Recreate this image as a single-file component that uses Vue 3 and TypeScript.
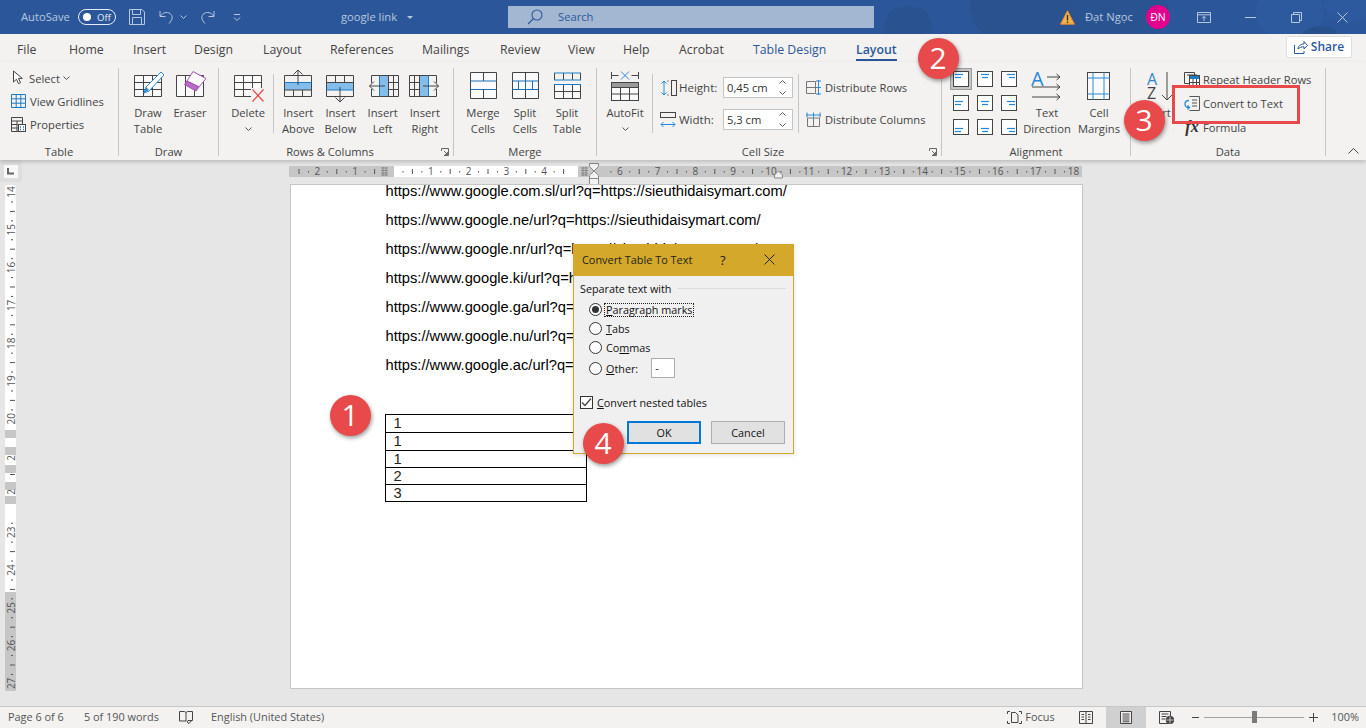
<script setup lang="ts">
const tabs = [
  { t: 'File', w: 52 }, { t: 'Home', w: 64 }, { t: 'Insert', w: 61 }, { t: 'Design', w: 69 },
  { t: 'Layout', w: 67 }, { t: 'References', w: 92 }, { t: 'Mailings', w: 78 }, { t: 'Review', w: 68 },
  { t: 'View', w: 55 }, { t: 'Help', w: 56 }, { t: 'Acrobat', w: 74 },
  { t: 'Table Design', w: 103, c: 'ctx' }, { t: 'Layout', w: 60, c: 'ctx on' },
]
const links = ['com.sl', 'ne', 'nr', 'ki', 'ga', 'nu', 'ac'].map(
  (d) => `https://www.google.${d}/url?q=https://sieuthidaisymart.com/`,
)
const rows = [
  { v: '1', h: 18 }, { v: '1', h: 18 }, { v: '1', h: 17 }, { v: '2', h: 17 }, { v: '3', h: 17 },
]
const aligns = [0, 1, 2].flatMap((r) => [0, 1, 2].map((c) => ({ r, c })))
const radios = [
  { pre: '', u: 'P', post: 'aragraph marks', on: true, cls: 'focus' },
  { pre: '', u: 'T', post: 'abs', on: false, cls: '' },
  { pre: 'Co', u: 'm', post: 'mas', on: false, cls: '' },
]
const base = 393
const cm = 37.8
const hLabels = [-2, -1, 1, 2, 3, 4, 6, 7, 8, 9, 10, 11, 12, 13, 14, 15, 16, 17, 18].map((n) => ({
  n,
  t: String(Math.abs(n)),
  x: base + cm * n,
}))
const hTicks: { x: number; big: boolean }[] = []
for (let i = -10; i < 74; i++) {
  if (i % 4 === 0) continue
  const x = base + (cm * i) / 4
  if (x < 292 || x > 1080 || (x > 378 && x < 395) || (x > 572 && x < 604)) continue
  hTicks.push({ x, big: i % 2 !== 0 ? false : true })
}
const vY = (n: number) => 7 + cm * (n - 14)
const vLabels = [14, 15, 16, 17, 18, 19, 20, 23, 24, 25, 26, 27].map((n) => ({ t: String(n), y: vY(n) }))
const vTicks: { y: number; big: boolean }[] = []
for (let i = 0; i < 56; i++) {
  if (i % 4 === 0) continue
  const y = vY(14) + (cm * i) / 4
  if (y > 504 || (y > 238 && y < 330)) continue
  vTicks.push({ y, big: i % 2 === 0 })
}
const vBands = [245, 262, 280, 297, 311]
</script>

<template>
  <div class="app">
    <header class="titlebar">
      <svg class="blobs" width="1366" height="34" aria-hidden="true">
        <ellipse cx="908" cy="26" rx="24" ry="20" fill="#295290" />
        <ellipse cx="1040" cy="8" rx="70" ry="44" fill="#29528e" />
        <ellipse cx="1120" cy="10" rx="48" ry="38" fill="#2a5391" />
        <ellipse cx="1290" cy="12" rx="34" ry="30" fill="#2d5a9f" />
        <ellipse cx="1350" cy="2" rx="26" ry="20" fill="#2d5a9f" />
        <ellipse cx="1320" cy="36" rx="18" ry="10" fill="#28508c" />
      </svg>
      <span class="autosave">AutoSave</span>
      <span class="toggle"><i></i><b>Off</b></span>
      <svg class="q save" width="16" height="16" viewBox="0 0 16 16"><path d="M.5.5h12.500l2.500 2.500v12.500H.5zM3.500.5v5h8v-5M3.500 15.500v-7h9v7" /></svg>
      <svg class="q undo" width="16" height="16" viewBox="0 0 16 16"><path d="M1 2v5.500h5.500M1.500 7C3.500 3.500 8 2.500 11 4.500c3 2.500 3 6-1 10" /></svg>
      <svg class="q chev1" width="7" height="4" viewBox="0 0 7 4"><path d="M.5.5l3 3 3-3" /></svg>
      <svg class="q redo" width="16" height="16" viewBox="0 0 16 16"><path d="M15 2v5.500H9.500M14.500 7C12.500 3.500 8 2.500 5 4.500c-3 2.500-3 6 1 10" /></svg>
      <svg class="q more" width="8" height="7" viewBox="0 0 8 7"><path d="M1 .5h6M1 3.500l3 3 3-3" /></svg>
      <span class="fname t">google link</span>
      <span class="caret"></span>
      <div class="search">
        <svg width="16" height="16" viewBox="0 0 16 16" fill="none" stroke="#2b579a" stroke-width="1.1"><circle cx="10" cy="6" r="5" /><path d="M6.500 9.500L1 15" /></svg>
        <span class="t">Search</span>
      </div>
      <svg class="warn" width="15" height="15" viewBox="0 0 15 15"><path d="M7.500 .8L14.500 14.200H.5z" fill="#f1b44a" stroke="#e8862c" /><path d="M7.500 5v5.500M7.500 11.500v1.500" stroke="#333" stroke-width="1.400" /></svg>
      <span class="user t">Đạt Ngọc</span>
      <span class="avatar">ĐN</span>
      <svg class="q present" width="14" height="11" viewBox="0 0 14 11"><path d="M.5.5h13v10H.5zM.5 2.800h13M7 9V4.500M5 6.300l2-2 2 2" /></svg>
      <svg class="q mini" width="11" height="1" viewBox="0 0 11 1"><path d="M0 .5h11" /></svg>
      <svg class="q rest" width="11" height="11" viewBox="0 0 11 11"><path d="M.5 2.500h8v8h-8zM2.500 2.500v-2h8v8h-2" /></svg>
      <svg class="q close" width="11" height="11" viewBox="0 0 11 11"><path d="M.5.5l10 10M10.500.5l-10 10" /></svg>
    </header>

    <nav class="tabs">
      <span v-for="(tab, i) in tabs" :key="i" class="tab" :class="tab.c" :style="{ width: tab.w + 'px' }"><em>{{ tab.t }}</em></span>
      <span class="share">
        <svg width="14" height="14" viewBox="0 0 14 14" fill="none" stroke="#2b579a"><path d="M.5 5v8.500h9.500V11M4 9c0-3 2.500-5 6-5V1.500L13.500 5.500 10 9V6.800C7.500 6.800 5.500 7.500 4 9z" /></svg>
        Share
      </span>
    </nav>

    <section class="ribbon">
      <div class="group g-table">
        <div class="body col-list">
          <div class="mini-row">
            <svg width="14" height="16" viewBox="0 0 14 16" fill="#fff" stroke="#444"><path d="M2.500 1v11l3-2.800 2 4.500 2-1-2-4.300h3.800z" /></svg>
            <span>Select</span><svg class="ch" width="7" height="4" viewBox="0 0 7 4"><path d="M.5.5l3 3 3-3" /></svg>
          </div>
          <div class="mini-row">
            <svg width="15" height="14" viewBox="0 0 15 14" fill="none" stroke="#1e7bc8"><path d="M.5.5h14v13H.5zM5.200.5v13M9.800.5v13M.5 4.800h14M.5 9.200h14" /></svg>
            <span>View Gridlines</span>
          </div>
          <div class="mini-row">
            <svg width="15" height="15" viewBox="0 0 15 15" fill="none" stroke="#444"><path d="M.5.5h11v14H.5zM.5 4h11M.5 7.500h6M.5 11h6M6 4v10.500" /><rect x="7.500" y="7.500" width="7" height="7" fill="#fff" /><path d="M9 10h1M12 10h1M9 12.500h1M12 12.500h1" stroke="#1e7bc8" stroke-width="1.400" /></svg>
            <span>Properties</span>
          </div>
        </div>
        <div class="label"><span>Table</span></div>
      </div>

      <div class="group g-draw">
        <div class="body">
          <div class="btn">
            <svg width="32" height="37" viewBox="0 0 32 37"><path class="grid" d="M2.500 7.500h27v21h-27zM11.500 7.500v21M20.500 7.500v21M2.500 14.500h27M2.500 21.500h27" /><path d="M29 4l3 3-15 16-5 2 2-6z" fill="#fff" stroke="#2b88d8" /><path d="M14 19l3 3-5 3z" fill="#2b88d8" /></svg>
            <span>Draw<br />Table</span>
          </div>
          <div class="btn">
            <svg width="32" height="37" viewBox="0 0 32 37"><path class="grid" d="M2.500 7.500h27v21h-27zM11.500 7.500v21M20.500 7.500v21" /><path d="M19 3.500l13 7-7 8.500-12-6z" fill="#fff" stroke="#a64fb5" /><path d="M13 13l12 6-3 4-11.500-6.500z" fill="#b46cc4" stroke="#a64fb5" /></svg>
            <span>Eraser</span>
          </div>
        </div>
        <div class="label"><span>Draw</span></div>
      </div>

      <div class="group g-rows">
        <div class="body">
          <div class="btn">
            <svg width="32" height="37" viewBox="0 0 32 37"><path class="grid" d="M2.500 7.500h27v21h-27zM11.500 7.500v21M20.500 7.500v21M2.500 14.500h27M2.500 21.500h27" /><rect x="19" y="20" width="14" height="15" fill="#f3f2f1" /><path d="M20.500 21.500l11 12M31.500 21.500l-11 12" stroke="#e8484a" stroke-width="1.200" fill="none" /></svg>
            <span>Delete</span>
            <svg class="ch mt" width="7" height="4" viewBox="0 0 7 4"><path d="M.5.5l3 3 3-3" /></svg>
          </div>
          <div class="vsep"></div>
          <div class="btn">
            <svg width="32" height="37" viewBox="0 0 32 37"><rect x="3" y="14" width="27" height="8" fill="#83bdec" /><path class="grid" d="M2.500 7.500h27v21h-27zM2.500 22h27M11.500 22v6.500M20.500 22v6.500" /><path d="M2.500 14.500h27" stroke="#1e7bc8" fill="none" /><path d="M16 2v15M11.500 6.500L16 2l4.500 4.500" fill="none" stroke="#444" /></svg>
            <span>Insert<br />Above</span>
          </div>
          <div class="btn">
            <svg width="32" height="37" viewBox="0 0 32 37"><rect x="3" y="14" width="27" height="8" fill="#83bdec" /><path class="grid" d="M2.500 7.500h27v21h-27zM2.500 14.500h27M11.500 7.500v7M20.500 7.500v7" /><path d="M2.500 22h27" stroke="#1e7bc8" fill="none" /><path d="M16 19v15M11.500 29.500L16 34l4.500-4.500" fill="none" stroke="#444" /></svg>
            <span>Insert<br />Below</span>
          </div>
          <div class="btn">
            <svg width="32" height="37" viewBox="0 0 32 37"><rect x="12" y="8" width="9" height="20" fill="#83bdec" /><path class="grid" d="M4.500 7.500h27v21h-27zM21.500 7.500v21M21.500 14.500h10M21.500 21.500h10M26.500 7.500v21" /><path d="M12.500 7.500v21" stroke="#1e7bc8" fill="none" /><rect x="1" y="15" width="10" height="6" fill="#f3f2f1" /><path d="M18 18H2.500M7 13.500L2.500 18 7 22.500" fill="none" stroke="#444" /></svg>
            <span>Insert<br />Left</span>
          </div>
          <div class="btn">
            <svg width="32" height="37" viewBox="0 0 32 37"><rect x="11" y="8" width="9" height="20" fill="#83bdec" /><path class="grid" d="M.5 7.500h27v21H.5zM10.500 7.500v21M.5 14.500h10M.5 21.500h10M5.500 7.500v21" /><path d="M19.500 7.500v21" stroke="#1e7bc8" fill="none" /><rect x="22" y="15" width="8" height="6" fill="#f3f2f1" /><path d="M14 18h15.500M25 13.500l4.500 4.500-4.500 4.500" fill="none" stroke="#444" /></svg>
            <span>Insert<br />Right</span>
          </div>
        </div>
        <div class="label"><span>Rows &amp; Columns</span><svg class="launch" width="8" height="8" viewBox="0 0 8 8"><path d="M.5 3V.5h7v7H3M3 3l3.500 3.500M6.500 4v2.500H4" /></svg></div>
      </div>

      <div class="group g-merge">
        <div class="body">
          <div class="btn">
            <svg width="32" height="37" viewBox="0 0 32 37"><path class="grid" d="M3.500 4.500h26v26h-26zM16.500 4.500v8.500M16.500 21.500v9" /><path d="M3.500 13h26M3.500 21.500h26" stroke="#1a6fb5" fill="none" /></svg>
            <span>Merge<br />Cells</span>
          </div>
          <div class="btn">
            <svg width="32" height="37" viewBox="0 0 32 37"><path class="grid" d="M3.500 4.500h26v26h-26zM16.500 4.500v8.500M16.500 21.500v9" /><path d="M3.500 13h26M3.500 21.500h26M9.500 13v8.500M16.500 13v8.500M23.500 13v8.500" stroke="#1a6fb5" fill="none" /></svg>
            <span>Split<br />Cells</span>
          </div>
          <div class="btn">
            <svg width="32" height="37" viewBox="0 0 32 37"><path class="grid" d="M3.500 5v7M12.500 5v7M21.500 5v7M29.500 5v7M3.500 16.500h26v14h-26zM3.500 23.500h26M12.500 16.500v14M21.500 16.500v14" /><path d="M3 5h27M3 12h27M3 16.500h27" stroke="#1a7cc4" fill="none" /></svg>
            <span>Split<br />Table</span>
          </div>
        </div>
        <div class="label"><span>Merge</span></div>
      </div>

      <div class="group g-size">
        <div class="body">
          <div class="btn">
            <svg width="32" height="37" viewBox="0 0 32 37"><path class="grid" d="M2.500 4v7M29.500 4v7M2.500 7.500h7M22.500 7.500h7" /><path d="M12 3.500l8 8M20 3.500l-8 8" stroke="#2b88d8" fill="none" /><rect x="2.500" y="14.500" width="27" height="18" fill="#fafafa" stroke="#444" /><rect x="2.500" y="14.500" width="27" height="5" fill="#9a9a9a" stroke="#444" /><path class="grid" d="M2.500 26h27M11.500 19.500v13M20.500 19.500v13" /></svg>
            <span>AutoFit</span>
            <svg class="ch mt" width="7" height="4" viewBox="0 0 7 4"><path d="M.5.5l3 3 3-3" /></svg>
          </div>
          <div class="vsep s1"></div>
          <div class="size-col">
            <div class="size-row">
              <svg width="17" height="16" viewBox="0 0 17 16" fill="none"><path d="M4 1v14M1.500 3.500L4 1l2.500 2.500M1.500 12.500L4 15l2.500-2.500" stroke="#2b88d8" /><path d="M7 1h2M7 15h2" stroke="#888" /><rect x="11.500" y=".5" width="5" height="15" stroke="#444" /></svg>
              <span class="lab">Height:</span>
              <div class="spin"><span>0,45 cm</span><svg width="7" height="15" viewBox="0 0 7 15"><path d="M.5 3.500l3-3 3 3M.5 11.500l3 3 3-3" /></svg></div>
            </div>
            <div class="size-row">
              <svg width="17" height="16" viewBox="0 0 17 16" fill="none"><rect x=".5" y=".5" width="15" height="5" stroke="#444" /><path d="M1 12.500h14M3.500 10L1 12.500 3.500 15M12.500 10l2.500 2.500-2.500 2.500" stroke="#2b88d8" /></svg>
              <span class="lab">Width:</span>
              <div class="spin"><span>5,3 cm</span><svg width="7" height="15" viewBox="0 0 7 15"><path d="M.5 3.500l3-3 3 3M.5 11.500l3 3 3-3" /></svg></div>
            </div>
          </div>
          <div class="vsep s2"></div>
          <div class="dist-col">
            <div class="dist-row">
              <svg width="15" height="15" viewBox="0 0 15 15" fill="none"><path d="M.5 1.500h9v12h-9zM.5 7.500h9" stroke="#777" /><path d="M12.500 0v15M10 1h5M10 7.500h5M10 14h5" stroke="#2b88d8" /></svg>
              <span>Distribute Rows</span>
            </div>
            <div class="dist-row">
              <svg width="15" height="15" viewBox="0 0 15 15" fill="none"><path d="M1.500 6h12v8.500h-12zM7.500 6v8.500" stroke="#777" /><path d="M0 3h15M1 .5v5M7.500 .5v5M14 .5v5" stroke="#2b88d8" /></svg>
              <span>Distribute Columns</span>
            </div>
          </div>
        </div>
        <div class="label"><span>Cell Size</span><svg class="launch" width="8" height="8" viewBox="0 0 8 8"><path d="M.5 3V.5h7v7H3M3 3l3.500 3.500M6.500 4v2.500H4" /></svg></div>
      </div>

      <div class="group g-align">
        <div class="body">
          <div class="al-grid">
            <span v-for="a in aligns" :key="a.r * 3 + a.c" class="al" :class="{ sel: a.r === 0 && a.c === 0 }">
              <svg width="16" height="16" viewBox="0 0 16 16" fill="none">
                <rect x=".5" y=".5" width="15" height="15" fill="#fff" stroke="#444" />
                <path :d="`M${2 + a.c * 2} ${3.5 + a.r * 3}h8`" stroke="#1e88e0" stroke-width="1.200" />
                <path :d="`M${2 + a.c * 3} ${6.5 + a.r * 3}h6`" stroke="#1e88e0" stroke-width="1.200" />
              </svg>
            </span>
          </div>
          <div class="btn wide">
            <svg width="32" height="37" viewBox="0 0 32 37" fill="none">
              <text x="0" y="18" class="bigA">A</text>
              <path d="M16 9h13M25.500 6l3.500 3-3.500 3M1 19h28M25.500 16l3.500 3-3.500 3M1 29h28M25.500 26l3.500 3-3.500 3" stroke="#444" />
            </svg>
            <span>Text<br />Direction</span>
          </div>
          <div class="btn wide2">
            <svg width="32" height="37" viewBox="0 0 32 37" fill="none"><rect x="4.500" y="4.500" width="22" height="27" stroke="#444" fill="#fafafa" /><path d="M4.500 10h22M4.500 26h22M10 4.500v27M21 4.500v27" stroke="#2b88d8" /></svg>
            <span>Cell<br />Margins</span>
          </div>
        </div>
        <div class="label"><span>Alignment</span></div>
      </div>

      <div class="group g-data">
        <div class="body">
          <div class="btn sort">
            <svg width="32" height="37" viewBox="0 0 32 37" fill="none">
              <text x="3" y="17" class="azA">A</text><text x="3" y="31" class="azZ">Z</text>
              <path d="M23 4v28M18 27l5 5 5-5" stroke="#444" />
            </svg>
            <span>Sort</span>
          </div>
          <div class="data-col">
            <div class="data-row">
              <svg width="16" height="15" viewBox="0 0 16 15" fill="none"><path d="M.5.5h10v11H.5zM3 3h10" stroke="#444" /><rect x="5.500" y="3.500" width="10" height="11" fill="#fff" stroke="#444" /><path d="M6 4h9v3H6z" fill="#1e7bc8" /><path d="M5.500 10.500h10M9 7v7M12.500 7v7" stroke="#444" /></svg>
              <span>Repeat Header Rows</span>
            </div>
            <div class="data-row">
              <svg width="16" height="15" viewBox="0 0 16 15" fill="none"><path d="M5.500.5h10v14h-10" stroke="#555" /><path d="M8 4h5M8 7h5M8 10h5" stroke="#555" /><path d="M5 4.500C2 4.500 1 6 1 8s1.500 3.500 4 3.500M3.500 9.500l2 2-2 2" stroke="#2b88d8" stroke-width="1.300" /></svg>
              <span>Convert to Text</span>
            </div>
            <div class="data-row">
              <span class="fx">fx</span>
              <span>Formula</span>
            </div>
          </div>
        </div>
        <div class="label"><span>Data</span></div>
      </div>

      <div class="collapse">
        <svg width="11" height="6" viewBox="0 0 11 6" fill="none" stroke="#444"><path d="M.5 5.500l5-5 5 5" /></svg>
      </div>
    </section>

    <svg class="hruler" width="1366" height="25" viewBox="0 160 1366 25">
      <rect x="0" y="160" width="22" height="22" fill="#dedede" />
      <rect x="4" y="165" width="14" height="13" fill="#f8f8f8" />
      <path d="M8 168v5.500h6" fill="none" stroke="#666" stroke-width="2" />
      <rect x="289" y="166" width="793" height="11" fill="#c6c6c6" />
      <rect x="394" y="166" width="184" height="11" fill="#fff" />
      <path d="M381 168h7M381 170.500h7M381 173h7M381 175h7M383 167v9M386 167v9M581 168h7M581 170.500h7M581 173h7M581 175h7M583 167v9M586 167v9" stroke="#777" stroke-width=".7" fill="none" />
      <g fill="#555">
        <rect v-for="(k, i) in hTicks" :key="i" :x="k.x" :y="k.big ? 169 : 171" width="1" :height="k.big ? 5 : 1.5" />
      </g>
      <text v-for="l in hLabels" :key="l.n" :x="l.x" y="175" class="rtxt" text-anchor="middle">{{ l.t }}</text>
      <path d="M589.500 163.500h9v3l-4.500 4.500-4.500-4.500zM589.500 178.500v-3l4.500-4.500 4.500 4.500v3z" fill="#f2f2f2" stroke="#888" />
      <rect x="589.500" y="178.500" width="9" height="6" fill="#f2f2f2" stroke="#888" />
      <path d="M774.500 178v-3l4-4 4 4v3z" fill="#f2f2f2" stroke="#888" />
    </svg>

    <main class="work">
      <svg class="vruler" width="291" height="522" viewBox="0 0 291 522">
        <rect x="5" y="0" width="11" height="506" fill="#fff" />
        <rect v-for="b in vBands" :key="b" x="5" :y="b" width="11" height="8" fill="#c6c6c6" />
        <rect x="5" y="407" width="11" height="99" fill="#c6c6c6" />
        <g fill="#555">
          <rect v-for="(k, i) in vTicks" :key="i" :x="k.big ? 10 : 11" :y="k.y" :width="k.big ? 5 : 2" height="1" />
        </g>
        <text v-for="l in vLabels" :key="l.t" class="rtxt" text-anchor="middle" :transform="`translate(15 ${l.y}) rotate(-90)`">{{ l.t }}</text>
        <text class="rtxt" text-anchor="middle" transform="translate(15 273) rotate(-90)">2</text>
        <text class="rtxt" text-anchor="middle" transform="translate(15 307) rotate(-90)">2</text>
        <rect x="10" y="289" width="5" height="1" fill="#555" />
      </svg>
      <article class="page">
        <p v-for="l in links" :key="l" class="line">{{ l }}</p>
        <table class="tbl">
          <tbody>
            <tr v-for="(r, i) in rows" :key="i" :style="{ height: r.h + 'px' }"><td>{{ r.v }}</td></tr>
          </tbody>
        </table>
      </article>
    </main>

    <footer class="status">
      <span class="s1a t">Page 6 of 6</span>
      <span class="s1b t">5 of 190 words</span>
      <svg class="s1c" width="14" height="13" viewBox="0 0 14 13" fill="none" stroke="#444"><path d="M.5.500h5l1.500 1 1.500-1h5v9H9L8 11M7 1.500V10H.5V.5M8 11l2 1.500 3.500-4" /></svg>
      <span class="s1d t">English (United States)</span>
      <span class="grow"></span>
      <svg width="15" height="13" viewBox="0 0 15 13" fill="none" stroke="#444"><path d="M.5 3V.5H3M12 .5h2.500V3M.5 10v2.500H3M12 12.500h2.500V10M4.500 11.500v-10h4l2.500 2.500v7.500z" /></svg>
      <span class="focus-t t">Focus</span>
      <svg class="v1" width="14" height="13" viewBox="0 0 14 13" fill="none" stroke="#444"><path d="M.5.5h13v12H.5zM7 .5v12M2.500 3.500h2.500M2.500 6h2.500M2.500 8.500h2.500M9 3.500h2.500M9 6h2.500M9 8.500h2.500" /></svg>
      <span class="v2">
        <svg width="12" height="13" viewBox="0 0 12 13" fill="#f3f2f1" stroke="#444"><path d="M.5.5h11v12H.5z" /><path d="M2.500 3h7M2.500 5h7M2.500 7h7M2.500 9h7M2.500 10.800h7" fill="none" /></svg>
      </span>
      <svg class="v3" width="15" height="13" viewBox="0 0 15 13" fill="none" stroke="#444"><path d="M9 12.500H.5V.5h11v5M2.500 3h7M2.500 5.500h5M2.500 8h4" /><circle cx="11" cy="9" r="3.800" fill="#444" /><path d="M7.500 9h7M11 5.500v7" stroke="#f3f2f1" stroke-width=".7" /></svg>
      <span class="minus"></span>
      <span class="slider"><i></i></span>
      <span class="plus"></span>
      <span class="pct t">100%</span>
    </footer>

    <!-- Dialog floating above the document -->
    <div class="dialog">
      <div class="d-title">
        <span class="d-name">Convert Table To Text</span>
        <span class="d-q">?</span>
        <svg width="11" height="11" viewBox="0 0 11 11" fill="none" stroke="#222"><path d="M.5.5l10 10M10.500.5l-10 10" /></svg>
      </div>
      <div class="d-body">
        <div class="legend"><span>Separate text with</span><i></i></div>
        <div v-for="r in radios" :key="r.u" class="radio-row">
          <span class="radio" :class="{ on: r.on }"></span>
          <span class="r-label" :class="r.cls">{{ r.pre }}<u>{{ r.u }}</u>{{ r.post }}</span>
        </div>
        <div class="radio-row other">
          <span class="radio"></span>
          <span class="r-label"><u>O</u>ther:</span>
          <span class="other-in">-</span>
        </div>
        <div class="check-row">
          <span class="check">
            <svg width="11" height="9" viewBox="0 0 11 9" fill="none" stroke="#444" stroke-width="1.300"><path d="M1 4.500l3 3 6-7" /></svg>
          </span>
          <span><u>C</u>onvert nested tables</span>
        </div>
        <div class="d-btns">
          <button class="ok" type="button">OK</button>
          <button type="button">Cancel</button>
        </div>
      </div>
    </div>

    <!-- Callouts drawn over the screenshot -->
    <span class="mark m1">1</span>
    <span class="mark m2">2</span>
    <span class="mark m3">3</span>
    <span class="mark m4">4</span>
    <span class="redbox"></span>
  </div>
</template>

<style scoped>
.app {
  position: relative;
  width: 1366px;
  height: 728px;
  overflow: hidden;
  display: flex;
  flex-direction: column;
  background: #e6e6e6;
  font-family: "Open Sans", "Liberation Sans", sans-serif;
  font-size: 11.2px;
  color: #444;
}
svg { display: block; flex: none; }
.t { margin-bottom: 2px; }

/* title bar */
.titlebar {
  position: relative;
  height: 34px;
  flex: none;
  background: #2b579a;
  display: flex;
  align-items: center;
  color: #b7c7de;
  overflow: hidden;
}
.titlebar > * { position: relative; }
.titlebar > .blobs { position: absolute; left: 0; top: 0; }
.q { fill: none; stroke: #b7c7de; stroke-width: 1; }
.autosave { margin: 0 0 1px 21px; width: 57px; }
.toggle {
  width: 38px;
  height: 16px;
  box-sizing: border-box;
  border: 1px solid #e6ecf5;
  border-radius: 8px;
  display: flex;
  align-items: center;
  padding-left: 4px;
  color: #e6ecf5;
  font-size: 9.5px;
}
.toggle i { width: 8px; height: 8px; border-radius: 50%; background: #fff; margin-right: 6px; }
.toggle b { font-weight: 400; }
.save { margin-left: 13px; }
.undo { margin-left: 14px; }
.chev1 { margin-left: 5px; }
.redo { margin-left: 12px; }
.more { margin-left: 18px; }
.fname { margin-left: 100px; width: 66px; }
.caret {
  width: 0; height: 0;
  border-left: 3px solid transparent;
  border-right: 3px solid transparent;
  border-top: 3px solid #b7c7de;
}
.search {
  margin-left: 95px;
  width: 366px;
  height: 22px;
  background: #a4b7d2;
  display: flex;
  align-items: center;
  padding-left: 19px;
  box-sizing: border-box;
  color: #2b579a;
}
.search span { margin-left: 15px; }
.warn { margin-left: 186px; }
.user { margin-left: 10px; width: 61px; }
.avatar {
  width: 24px; height: 24px;
  border-radius: 50%;
  background: #e3008c;
  color: #fff;
  display: flex;
  align-items: center;
  justify-content: center;
  font-size: 10.5px;
}
.present { margin-left: 27px; }
.mini { margin-left: 34px; }
.rest { margin-left: 35px; }
.close { margin-left: 35px; }

/* tabs */
.tabs {
  height: 28px;
  flex: none;
  background: #f3f2f1;
  display: flex;
  align-items: center;
  padding-left: 17px;
  box-sizing: border-box;
  font-size: 12.3px;
}
.tab { position: relative; height: 28px; line-height: 31px; flex: none; }
.tab em { font-style: normal; display: inline-block; height: 27px; }
.tab.ctx { color: #2b579a; }
.tab.on em { border-bottom: 2px solid #2b579a; font-weight: 600; box-sizing: border-box; }
.share {
  margin-left: 370px;
  width: 66px;
  height: 22px;
  background: #fff;
  border: 1px solid #e1dfdd;
  border-radius: 2px;
  box-sizing: border-box;
  color: #2b579a;
  font-weight: 600;
  display: flex;
  align-items: center;
  justify-content: center;
  gap: 3px;
  font-size: 12px;
  margin-top: -3px;
}

/* ribbon */
.ribbon {
  position: relative;
  z-index: 2;
  height: 98px;
  flex: none;
  background: #f3f2f1;
  box-shadow: 0 2px 4px rgba(0, 0, 0, .18);
  display: flex;
  padding-top: 6px;
  box-sizing: border-box;
}
.group {
  height: 88px;
  flex: none;
  box-sizing: border-box;
  border-right: 1px solid #c8c6c4;
  display: flex;
  flex-direction: column;
}
.body { height: 76px; display: flex; flex: none; }
.label {
  height: 12px;
  display: flex;
  line-height: 16px;
  flex: none;
}
.label span { flex: 1; text-align: center; }
.launch { fill: none; stroke: #666; margin: 4px 4px 0 0; }
.g-table { width: 119px; }
.g-draw { width: 100px; }
.g-rows { width: 235px; }
.g-merge { width: 143px; }
.g-size { width: 345px; }
.g-align { width: 189px; }
.g-data { width: 195px; }
.g-draw .body, .g-rows .body, .g-merge .body { padding-left: 8px; }
.g-size .body { padding-left: 7px; }
.g-rows .btn { width: 42.2px; }
.col-list { flex-direction: column; padding: 0 0 0 11px; gap: 3px; }
.mini-row { height: 20px; display: flex; align-items: center; gap: 4px; }
.ch { fill: none; stroke: #555; margin-left: -1px; }
.btn {
  width: 42px;
  flex: none;
  display: flex;
  flex-direction: column;
  align-items: center;
  text-align: center;
  line-height: 16px;
}
.btn span { display: block; }
.btn svg + span { white-space: nowrap; }
.grid { fill: none; stroke: #444; }
.btn:has(.grid) > svg:first-child .grid:first-child { fill: #fafafa; }
.ch.mt { margin: 6px 0 0; }
.vsep { width: 1px; height: 59px; margin: 6px 3px 0 4px; background: #c8c6c4; flex: none; }
.vsep.s1 { margin: 6px 7px 0 6px; }
.vsep.s2 { margin: 6px 7px 0 5px; }
.size-col { width: 133px; display: flex; flex-direction: column; gap: 11px; padding-top: 9px; flex: none; }
.size-row { display: flex; align-items: center; height: 21px; }
.lab { margin-left: 2px; width: 44px; font-size: 11.5px; }
.spin {
  width: 70px;
  height: 21px;
  box-sizing: border-box;
  background: #fff;
  border: 1px solid #c4c4c4;
  display: flex;
  align-items: center;
  justify-content: space-between;
  padding: 0 6px 0 3px;
  color: #333;
}
.spin svg { fill: none; stroke: #555; }
.dist-col { display: flex; flex-direction: column; gap: 12px; padding-top: 9px; }
.dist-row { display: flex; align-items: center; gap: 4px; height: 20px; white-space: nowrap; }
.al-grid {
  margin: 3px 0 0 11px;
  display: grid;
  grid-template-columns: 16px 16px 16px;
  grid-auto-rows: 16px;
  gap: 8px;
  flex: none;
  align-self: flex-start;
}
.al { position: relative; display: block; }
.al.sel::before {
  content: "";
  position: absolute;
  inset: -3px;
  background: #c8c6c4;
  border: 1px solid #9c9c9c;
}
.al svg { position: relative; }
.btn.wide { width: 58px; margin-left: 1px; }
.btn.wide2 { width: 46px; margin-left: 0; }
.bigA { font-size: 20px; fill: #2b88d8; font-family: "Open Sans", sans-serif; }
.azA { font-size: 16px; fill: #2b88d8; font-family: "Open Sans", sans-serif; }
.azZ { font-size: 16px; fill: #444; font-family: "Open Sans", sans-serif; }
.btn.sort { margin-left: 8px; }
.data-col { margin-left: 3px; display: flex; flex-direction: column; gap: 4px; padding-top: 1px; }
.data-row { height: 20px; display: flex; align-items: center; gap: 3px; white-space: nowrap; }
.fx { width: 16px; font: italic 700 16px "Liberation Serif", serif; color: #333; text-align: center; }
.collapse { margin: 80px 0 0 22px; }
.hruler { flex: none; }

/* workspace */
.work { flex: 1; display: flex; align-items: flex-start; min-height: 0; }
.vruler { flex: none; }
.rtxt { font-size: 10px; fill: #555; font-family: "Open Sans", sans-serif; }
.page {
  width: 791px;
  height: 503px;
  flex: none;
  background: #fff;
  box-shadow: 0 0 0 1px #c6c6c6;
  overflow: hidden;
  font-family: "Liberation Sans", sans-serif;
  font-size: 14.7px;
  color: #000;
  padding-left: 94.5px;
  box-sizing: border-box;
}
.line { margin: 0; height: 29px; line-height: 29px; white-space: nowrap; position: relative; top: -7px; }
.line:first-child { margin-top: -1px; }
.tbl {
  margin: 27px 0 0 -1px;
  border-collapse: collapse;
  width: 202px;
}
.tbl td {
  border: 1px solid #000;
  padding: 0 0 0 8px;
  line-height: 15px;
  color: #222;
}

/* status bar */
.status {
  height: 22px;
  flex: none;
  background: #f3f2f1;
  border-top: 1px solid #c8c6c4;
  box-sizing: border-box;
  display: flex;
  align-items: center;
  font-size: 10.9px;
  color: #555;
  padding-right: 7px;
}
.s1a { margin-left: 8px; width: 76px; }
.s1b { width: 95px; }
.s1d { margin-left: 18px; }
.grow { flex: 1; }
.focus-t { margin-left: 3px; width: 54px; }
.v2 { margin-left: 13px; width: 40px; height: 21px; background: #d0d0d0; display: flex; align-items: center; justify-content: center; }
.v3 { margin-left: 13px; }
.minus { margin-left: 18px; width: 7px; height: 1px; background: #444; }
.slider { position: relative; margin-left: 5px; width: 100px; height: 1px; background: #a0a0a0; }
.slider i { position: absolute; left: 48px; top: -6px; width: 5px; height: 12px; background: #7a7a7a; }
.plus { position: relative; margin-left: 5px; width: 9px; height: 1px; background: #444; }
.plus::after { content: ""; position: absolute; left: 4px; top: -4px; width: 1px; height: 9px; background: #444; }
.pct { margin-left: 13px; }

/* dialog */
.dialog {
  position: absolute;
  z-index: 5;
  left: 573px;
  top: 244px;
  width: 221px;
  height: 210px;
  box-sizing: border-box;
  border: 1px solid #d4a82a;
  background: #f0f0f0;
  box-shadow: 0 1px 4px rgba(0, 0, 0, .14);
  color: #111;
  font-family: "Open Sans", "Liberation Sans", sans-serif;
  font-size: 10.8px;
}
.d-title {
  height: 31px;
  background: #d4a82a;
  display: flex;
  align-items: center;
  padding: 0 0 2px 8px;
  box-sizing: border-box;
  color: #222;
  font-size: 10.9px;
}
.d-name { width: 138px; }
.d-q { width: 44px; font-size: 13px; }
.d-body { padding: 4px 6px 0; }
.legend { display: flex; align-items: center; gap: 5px; height: 16px; }
.legend i { flex: 1; height: 1px; background: #dcdcdc; margin-right: 1px; }
.radio-row { display: flex; align-items: center; height: 19px; padding-left: 9px; }
.legend + .radio-row { margin-top: 4px; }
.radio-row.other { height: 22px; }
.radio {
  width: 13px; height: 13px;
  box-sizing: border-box;
  border: 1px solid #333;
  border-radius: 50%;
  background: #fff;
  flex: none;
  margin-right: 3px;
  display: flex;
  align-items: center;
  justify-content: center;
}
.radio.on::after { content: ""; width: 7px; height: 7px; border-radius: 50%; background: #333; }
.r-label { padding: 0 1px; }
.r-label.focus { outline: 1px dotted #222; outline-offset: 0; line-height: 12px; }
.other-in {
  margin-left: 12px;
  width: 24px;
  height: 20px;
  box-sizing: border-box;
  background: #fff;
  border: 1px solid #adadad;
  padding-left: 3px;
  line-height: 18px;
}
.check-row { display: flex; align-items: center; gap: 4px; margin-top: 15px; height: 16px; }
.check {
  width: 13px; height: 13px;
  box-sizing: border-box;
  border: 1px solid #333;
  background: #fff;
  display: flex;
  align-items: center;
  justify-content: center;
}
.d-btns { display: flex; justify-content: flex-end; gap: 10px; margin: 11px 2px 0 0; }
.d-btns button {
  width: 74px;
  height: 23px;
  box-sizing: border-box;
  border: 1px solid #adadad;
  background: #e1e1e1;
  font: inherit;
  color: #111;
  padding: 0;
}
.d-btns .ok { border: 2px solid #0078d7; }

/* callouts */
.mark {
  position: absolute;
  z-index: 6;
  width: 41px;
  height: 41px;
  margin: -20.5px 0 0 -20.5px;
  border-radius: 50%;
  background: #e8494a;
  box-shadow: 1px 2px 4px rgba(0, 0, 0, .4);
  color: #fff;
  font-family: "Open Sans", sans-serif;
  font-size: 30px;
  line-height: 40px;
  text-align: center;
}
.m1 { left: 350px; top: 415px; }
.m2 { left: 938px; top: 58px; }
.m3 { left: 1144px; top: 120px; }
.m4 { left: 603px; top: 443px; }
.redbox {
  position: absolute;
  z-index: 6;
  left: 1172px;
  top: 85px;
  width: 128px;
  height: 39px;
  box-sizing: border-box;
  border: 3px solid #e8494a;
}
</style>
